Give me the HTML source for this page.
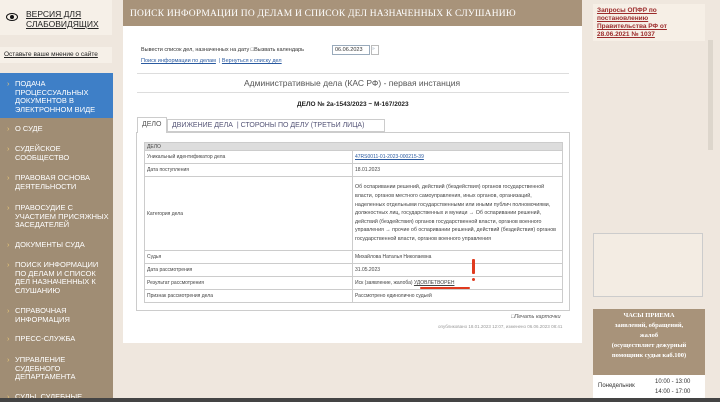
<!DOCTYPE html>
<html><head><meta charset="utf-8"><style>
*{margin:0;padding:0;box-sizing:border-box}
body{width:720px;height:402px;overflow:hidden;background:#efe7de;font-family:"Liberation Sans","DejaVu Sans",sans-serif;position:relative;color:#333}
.a{position:absolute}
a{color:inherit}
.nav{font-size:7.5px;color:#fff;line-height:8.5px;text-decoration:underline;text-transform:uppercase}
.nav span{position:absolute;left:7px;text-decoration:none;color:#e8c77a}
.nav div{position:absolute;left:15px}
td{border:1px solid #ccc;font-size:5px;padding:1px 2px;vertical-align:middle;color:#444;overflow:hidden}
table{border-collapse:collapse;width:418px;table-layout:fixed}
</style></head><body>
<div class="a" style="left:0;top:0;width:112px;height:35px;background:#f6f0e8"></div>
<div class="a" style="left:6px;top:13px;width:12px;height:8px;border:1.5px solid #111;border-radius:50%"></div>
<div class="a" style="left:10px;top:15px;width:4px;height:4px;background:#111;border-radius:50%"></div>
<div class="a" style="left:26px;top:9px;font-size:8.5px;line-height:10px;color:#222;text-decoration:underline">ВЕРСИЯ ДЛЯ<br>СЛАБОВИДЯЩИХ</div>
<div class="a" style="left:0;top:47px;width:112px;height:16px;background:#f6f0e8"></div>
<div class="a" style="left:4px;top:51px;font-size:6.5px;color:#222;text-decoration:underline">Оставьте ваше мнение о сайте</div>
<div class="a" style="left:0;top:73px;width:113px;height:45px;background:#3e7fc7"></div>
<div class="a" style="left:0;top:118px;width:113px;height:284px;background:#a08d74"></div>
<div class="a nav" style="left:0;top:0;width:113px;height:402px">
<span style="top:80px">›</span><div style="top:80px">Подача<br>процессуальных<br>документов в<br>электронном виде</div>
<span style="top:125px">›</span><div style="top:125px">О суде</div>
<span style="top:145px">›</span><div style="top:145px">Судейское<br>сообщество</div>
<span style="top:174px">›</span><div style="top:174px">Правовая основа<br>деятельности</div>
<span style="top:204px">›</span><div style="top:204px">Правосудие с<br>участием присяжных<br>заседателей</div>
<span style="top:241px">›</span><div style="top:241px">Документы суда</div>
<span style="top:261px">›</span><div style="top:261px">Поиск информации<br>по делам и список<br>дел назначенных к<br>слушанию</div>
<span style="top:307px">›</span><div style="top:307px">Справочная<br>информация</div>
<span style="top:335px">›</span><div style="top:335px">Пресс-служба</div>
<span style="top:356px">›</span><div style="top:356px">Управление<br>судебного<br>департамента</div>
<span style="top:393px">›</span><div style="top:393px">Суды, судебные</div>
</div>
<div class="a" style="left:123px;top:0;width:459px;height:26px;background:#a8937a"></div>
<div class="a" style="left:130px;top:9px;font-family:'Liberation Serif',serif;font-size:9.5px;color:#fff;letter-spacing:.2px">ПОИСК ИНФОРМАЦИИ ПО ДЕЛАМ И СПИСОК ДЕЛ НАЗНАЧЕННЫХ К СЛУШАНИЮ</div>
<div class="a" style="left:123px;top:26px;width:459px;height:317px;background:#fff"></div>
<div class="a" style="left:141px;top:47px;font-size:5.5px;color:#333">Вывести список дел, назначенных на дату &#9633;Вызвать календарь</div>
<div class="a" style="left:332px;top:45px;width:38px;height:10px;border:1px solid #9ab;font-size:5.5px;padding:1px 2px">06.06.2023</div>
<div class="a" style="left:371px;top:45px;width:8px;height:10px;border:1px solid #bbb;font-size:5px;color:#9ab">»</div>
<div class="a" style="left:141px;top:58px;font-size:5.5px;color:#2a5aa0;white-space:nowrap"><u>Поиск информации по делам</u>&nbsp; | <u>Вернуться к списку дел</u></div>
<div class="a" style="left:137px;top:73px;width:432px;height:1px;background:#ddd"></div>
<div class="a" style="left:137px;top:92px;width:432px;height:1px;background:#ddd"></div>
<div class="a" style="left:244px;top:78px;font-size:8.5px;color:#555">Административные дела (КАС РФ) - первая инстанция</div>
<div class="a" style="left:297px;top:101px;font-size:6.5px;font-weight:bold;color:#222">ДЕЛО № 2а-1543/2023 ~ М-167/2023</div>
<div class="a" style="left:136px;top:132px;width:434px;height:179px;border:1px solid #ccc"></div>
<div class="a" style="left:137px;top:117px;width:30px;height:16px;border:1px solid #ccc;border-bottom:none;background:#fff;font-size:7px;color:#555;padding:3px 4px">ДЕЛО</div>
<div class="a" style="left:167px;top:119px;width:218px;height:13px;border:1px solid #ccc;font-size:7px;color:#557;padding:2px 4px;white-space:nowrap">ДВИЖЕНИЕ ДЕЛА&nbsp;&nbsp;|&nbsp;СТОРОНЫ ПО ДЕЛУ (ТРЕТЬИ ЛИЦА)</div>
<div class="a" style="left:144px;top:142px;width:418px">
<table>
<colgroup><col style="width:208px"><col style="width:210px"></colgroup>
<tr><td colspan="2" style="background:#ddd;height:8px;padding:0 2px">ДЕЛО</td></tr>
<tr><td style="height:13px">Уникальный идентификатор дела</td><td style="color:#2a5aa0;text-decoration:underline">47RS0011-01-2023-000215-39</td></tr>
<tr><td style="height:13px">Дата поступления</td><td>18.01.2023</td></tr>
<tr><td style="height:74px">Категория дела</td><td style="line-height:8.6px;font-size:5.3px">Об оспаривании решений, действий (бездействия) органов государственной власти, органов местного самоуправления, иных органов, организаций, наделенных отдельными государственными или иными публич полномочиями, должностных лиц, государственных и муници → Об оспаривании решений, действий (бездействия) органов государственной власти, органов военного управления → прочие об оспаривании решений, действий (бездействия) органов государственной власти, органов военного управления</td></tr>
<tr><td style="height:13px">Судья</td><td>Михайлова Наталья Николаевна</td></tr>
<tr><td style="height:13px">Дата рассмотрения</td><td>31.05.2023</td></tr>
<tr><td style="height:13px">Результат рассмотрения</td><td style="white-space:nowrap">Иск (заявление, жалоба) <u>УДОВЛЕТВОРЕН</u></td></tr>
<tr><td style="height:13px">Признак рассмотрения дела</td><td>Рассмотрено единолично судьей</td></tr>
</table></div>
<div class="a" style="left:420px;top:287px;width:50px;height:2px;background:#e03a1e;border-radius:1px"></div>
<div class="a" style="left:472px;top:259px;width:3px;height:15px;background:#e03a1e;border-radius:1px"></div>
<div class="a" style="left:472px;top:278px;width:3px;height:3px;background:#e03a1e;border-radius:50%"></div>
<div class="a" style="left:511px;top:314px;font-size:5.5px;color:#555;font-style:italic">&#9633;Печать карточки</div>
<div class="a" style="left:438px;top:324px;font-size:4.5px;color:#999">опубликовано 18.01.2023 12:07, изменено 06.06.2023 08:41</div>
<div class="a" style="left:593px;top:4px;width:112px;height:37px;background:#f6efe6"></div>
<div class="a" style="left:597px;top:7px;font-size:6.5px;line-height:8px;font-weight:bold;color:#9b2a2a;text-decoration:underline">Запросы ОПФР по<br>постановлению<br>Правительства РФ от<br>28.06.2021 № 1037</div>
<div class="a" style="left:593px;top:233px;width:110px;height:64px;border:1px solid #ccc;background:#f3ece3"></div>
<div class="a" style="left:593px;top:309px;width:112px;height:66px;background:#a8937a"></div>
<div class="a" style="left:593px;top:311px;width:112px;text-align:center;font-family:'Liberation Serif',serif;font-size:6.5px;line-height:10px;font-weight:bold;color:#fff">ЧАСЫ ПРИЕМА<br>заявлений, обращений,<br>жалоб<br>(осуществляет дежурный<br>помощник судьи каб.100)</div>
<div class="a" style="left:593px;top:375px;width:112px;height:23px;background:#fff"></div>
<div class="a" style="left:598px;top:383px;font-size:6px;color:#333">Понедельник</div>
<div class="a" style="left:655px;top:377px;font-size:6px;line-height:10px;color:#333">10:00 - 13:00<br>14:00 - 17:00</div>
<div class="a" style="left:708px;top:40px;width:5px;height:110px;background:#ddd6cc"></div>
<div class="a" style="left:0;top:398px;width:720px;height:4px;background:#444"></div>
</body></html>
